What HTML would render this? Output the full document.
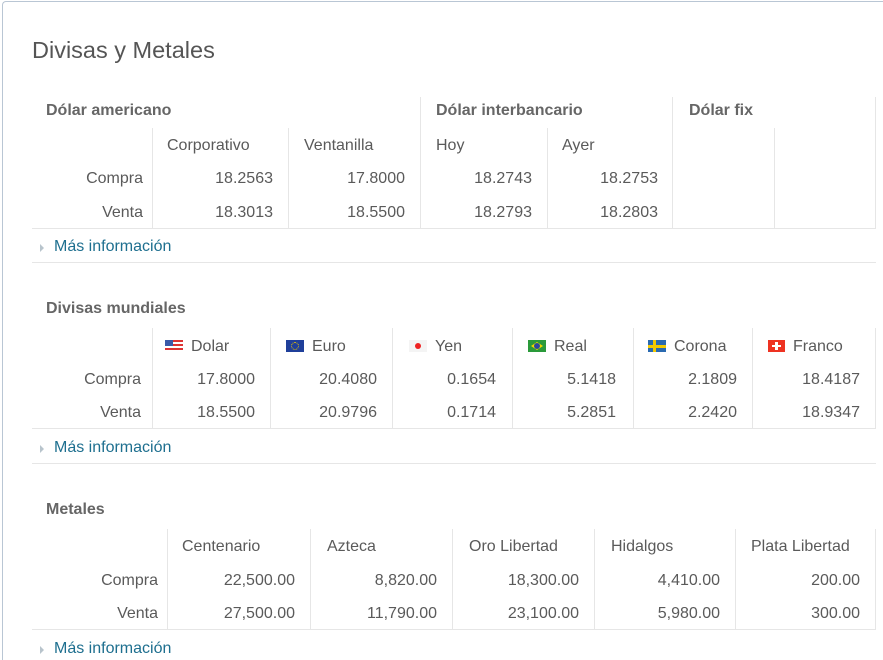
<!DOCTYPE html>
<html style="overflow:hidden;height:660px"><head><meta charset="utf-8"><style>
html,body{margin:0;width:883px;height:660px;overflow:hidden}
body{background:#fff;font-family:"Liberation Sans",Arial,sans-serif;color:#5a5a5a;position:relative}
.frame{position:absolute;left:2px;top:1px;width:890px;height:659px;border:1px solid #b9c6d4;border-bottom:none;border-right:none;border-radius:4px 0 0 0;box-sizing:border-box}
.wrap{position:absolute;left:0;top:6px;width:883px;height:654px;overflow:hidden}
.t{position:absolute;line-height:20px;font-size:16px;white-space:nowrap}
.r{text-align:right}
.h{font-weight:bold;font-size:16px;color:#666}
.v{position:absolute;width:1px;background:#e6e6e6;margin-top:-6px}
.hl{position:absolute;height:1px;background:#e6e6e6;left:32px;width:844px;margin-top:-6px}
.lk{position:absolute;font-size:16px;line-height:20px;color:#1e6f8f;left:54px}
.ar{position:absolute;left:40px;width:0;height:0;border-left:4px solid #b8c4cc;border-top:4px solid transparent;border-bottom:4px solid transparent}
.f{display:inline-block;width:18px;height:12px;vertical-align:-1px;margin-right:8px;position:relative;overflow:hidden}
</style></head><body>
<div class="frame"></div>
<div class="wrap">
<div class="t" style="left:32px;top:31px;font-size:23.5px;line-height:26px;color:#555">Divisas y Metales</div>

<div class="t h" style="left:46px;top:95px">Dólar americano</div>
<div class="t h" style="left:436px;top:95px">Dólar interbancario</div>
<div class="t h" style="left:689px;top:95px">Dólar fix</div>
<div class="v" style="left:420px;top:97px;height:131px"></div>
<div class="v" style="left:672px;top:97px;height:131px"></div>
<div class="v" style="left:875px;top:97px;height:131px"></div>
<div class="v" style="left:152px;top:128px;height:100px"></div>
<div class="v" style="left:288px;top:128px;height:100px"></div>
<div class="v" style="left:547px;top:128px;height:100px"></div>
<div class="v" style="left:774px;top:128px;height:100px"></div>
<div class="t" style="left:167px;top:130px">Corporativo</div>
<div class="t" style="left:304px;top:130px">Ventanilla</div>
<div class="t" style="left:436px;top:130px">Hoy</div>
<div class="t" style="left:562px;top:130px">Ayer</div>
<div class="t r" style="left:40px;width:103px;top:163px">Compra</div>
<div class="t r" style="left:40px;width:103px;top:197px">Venta</div>
<div class="t r" style="left:152px;width:121px;top:163px">18.2563</div>
<div class="t r" style="left:152px;width:121px;top:197px">18.3013</div>
<div class="t r" style="left:288px;width:117px;top:163px">17.8000</div>
<div class="t r" style="left:288px;width:117px;top:197px">18.5500</div>
<div class="t r" style="left:420px;width:112px;top:163px">18.2743</div>
<div class="t r" style="left:420px;width:112px;top:197px">18.2793</div>
<div class="t r" style="left:547px;width:111px;top:163px">18.2753</div>
<div class="t r" style="left:547px;width:111px;top:197px">18.2803</div>
<div class="hl" style="top:228px"></div>
<div class="ar" style="top:238px"></div>
<div class="lk" style="top:231px">Más información</div>
<div class="hl" style="top:262px"></div>

<div class="t h" style="left:46px;top:293px">Divisas mundiales</div>
<div class="v" style="left:152px;top:328px;height:100px"></div>
<div class="v" style="left:270px;top:328px;height:100px"></div>
<div class="v" style="left:392px;top:328px;height:100px"></div>
<div class="v" style="left:512px;top:328px;height:100px"></div>
<div class="v" style="left:633px;top:328px;height:100px"></div>
<div class="v" style="left:752px;top:328px;height:100px"></div>
<div class="v" style="left:875px;top:328px;height:100px"></div>
<div class="t" style="left:165px;top:331px"><span class="f" style="background:repeating-linear-gradient(#d33 0 2px,#fff 2px 4px)"><span style="position:absolute;left:0;top:0;width:8px;height:6px;background:#3b5aa8"></span></span>Dolar</div>
<div class="t" style="left:286px;top:331px"><span class="f" style="background:#1f3f9a"><span style="position:absolute;left:5px;top:2px;width:6px;height:6px;border:1px dotted #e8c400;border-radius:50%"></span></span>Euro</div>
<div class="t" style="left:409px;top:331px"><span class="f" style="background:#f4f4f4"><span style="position:absolute;left:6px;top:3px;width:6px;height:6px;background:#e22;border-radius:50%"></span></span>Yen</div>
<div class="t" style="left:528px;top:331px"><span class="f" style="background:#2a9a3a"><span style="position:absolute;left:3px;top:2px;width:12px;height:8px;background:#f2d600;clip-path:polygon(50% 0,100% 50%,50% 100%,0 50%)"></span><span style="position:absolute;left:6px;top:3px;width:6px;height:6px;background:#2a4a9a;border-radius:50%"></span></span>Real</div>
<div class="t" style="left:648px;top:331px"><span class="f" style="background:#2a6ab0"><span style="position:absolute;left:5px;top:0;width:3px;height:12px;background:#f2c900"></span><span style="position:absolute;left:0;top:5px;width:18px;height:3px;background:#f2c900"></span></span>Corona</div>
<div class="t" style="left:768px;top:331px"><span class="f" style="width:17px;background:#e32;"><span style="position:absolute;left:7px;top:2px;width:3px;height:8px;background:#fff"></span><span style="position:absolute;left:4px;top:5px;width:9px;height:2px;background:#fff"></span></span>Franco</div>
<div class="t r" style="left:40px;width:101px;top:364px">Compra</div>
<div class="t r" style="left:40px;width:101px;top:397px">Venta</div>
<div class="t r" style="left:152px;width:103px;top:364px">17.8000</div>
<div class="t r" style="left:152px;width:103px;top:397px">18.5500</div>
<div class="t r" style="left:270px;width:107px;top:364px">20.4080</div>
<div class="t r" style="left:270px;width:107px;top:397px">20.9796</div>
<div class="t r" style="left:392px;width:104px;top:364px">0.1654</div>
<div class="t r" style="left:392px;width:104px;top:397px">0.1714</div>
<div class="t r" style="left:512px;width:104px;top:364px">5.1418</div>
<div class="t r" style="left:512px;width:104px;top:397px">5.2851</div>
<div class="t r" style="left:633px;width:104px;top:364px">2.1809</div>
<div class="t r" style="left:633px;width:104px;top:397px">2.2420</div>
<div class="t r" style="left:752px;width:108px;top:364px">18.4187</div>
<div class="t r" style="left:752px;width:108px;top:397px">18.9347</div>
<div class="hl" style="top:428px"></div>
<div class="ar" style="top:439px"></div>
<div class="lk" style="top:432px">Más información</div>
<div class="hl" style="top:463px"></div>

<div class="t h" style="left:46px;top:494px">Metales</div>
<div class="v" style="left:167px;top:529px;height:100px"></div>
<div class="v" style="left:310px;top:529px;height:100px"></div>
<div class="v" style="left:452px;top:529px;height:100px"></div>
<div class="v" style="left:594px;top:529px;height:100px"></div>
<div class="v" style="left:735px;top:529px;height:100px"></div>
<div class="v" style="left:875px;top:529px;height:100px"></div>
<div class="t" style="left:182px;top:531px">Centenario</div>
<div class="t" style="left:327px;top:531px">Azteca</div>
<div class="t" style="left:469px;top:531px">Oro Libertad</div>
<div class="t" style="left:611px;top:531px">Hidalgos</div>
<div class="t" style="left:751px;top:531px">Plata Libertad</div>
<div class="t r" style="left:40px;width:118px;top:565px">Compra</div>
<div class="t r" style="left:40px;width:118px;top:598px">Venta</div>
<div class="t r" style="left:167px;width:128px;top:565px">22,500.00</div>
<div class="t r" style="left:167px;width:128px;top:598px">27,500.00</div>
<div class="t r" style="left:310px;width:127px;top:565px">8,820.00</div>
<div class="t r" style="left:310px;width:127px;top:598px">11,790.00</div>
<div class="t r" style="left:452px;width:127px;top:565px">18,300.00</div>
<div class="t r" style="left:452px;width:127px;top:598px">23,100.00</div>
<div class="t r" style="left:594px;width:126px;top:565px">4,410.00</div>
<div class="t r" style="left:594px;width:126px;top:598px">5,980.00</div>
<div class="t r" style="left:735px;width:125px;top:565px">200.00</div>
<div class="t r" style="left:735px;width:125px;top:598px">300.00</div>
<div class="hl" style="top:629px"></div>
<div class="ar" style="top:640px"></div>
<div class="lk" style="top:633px">Más información</div>
</div>
</body></html>
